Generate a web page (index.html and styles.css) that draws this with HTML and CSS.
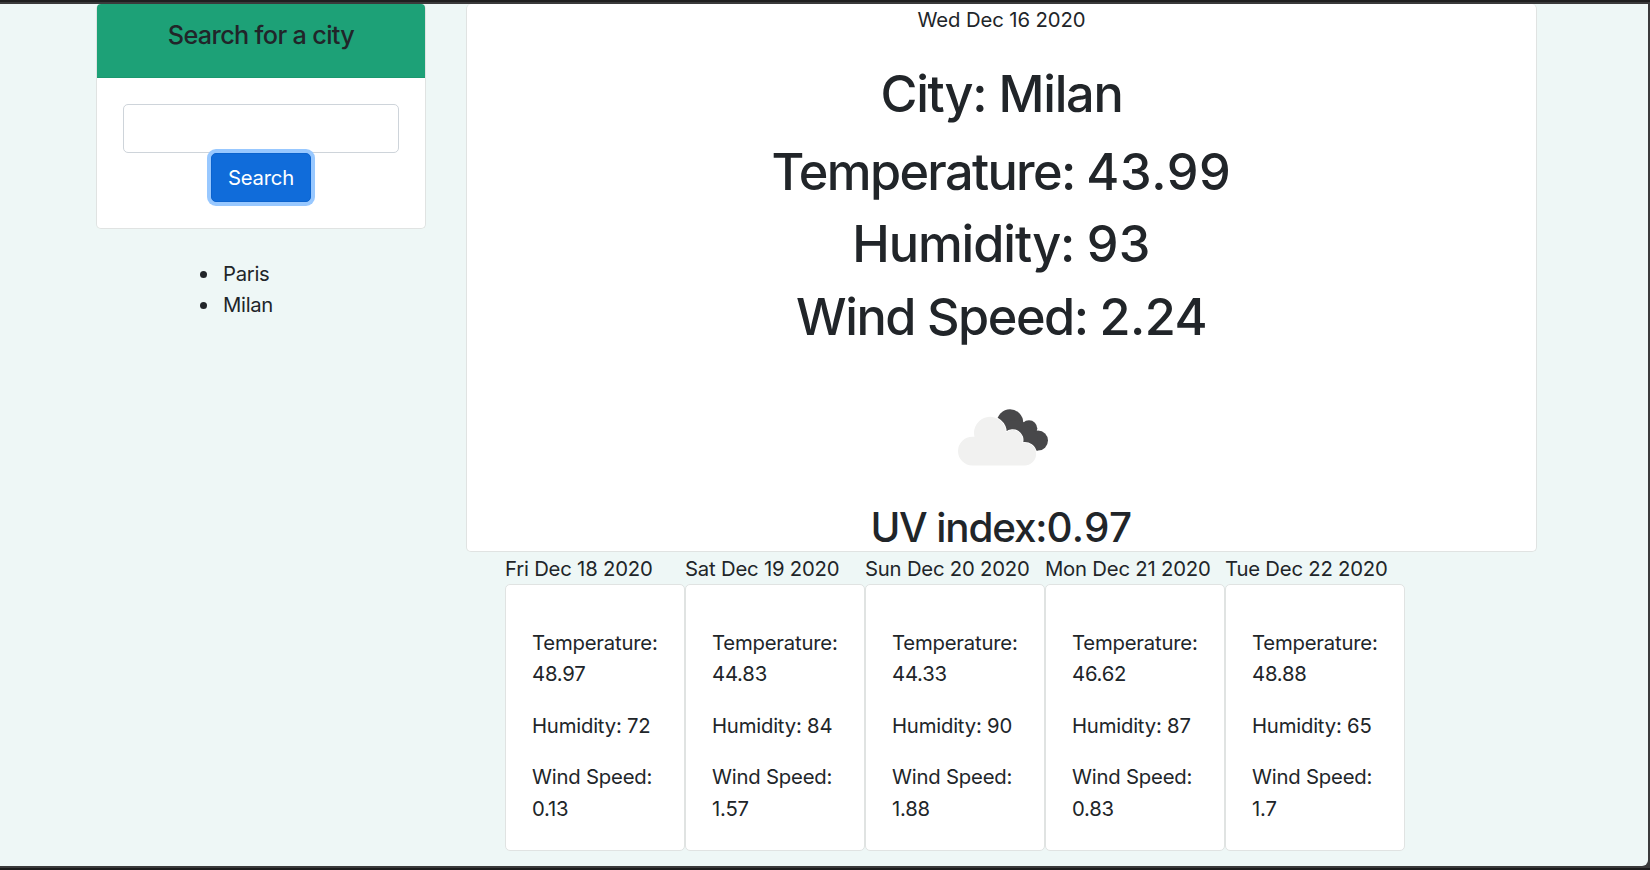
FILE: index.html
```html
<!DOCTYPE html>
<html lang="en">
<head>
<meta charset="utf-8">
<title>Weather Dashboard</title>
<link rel="stylesheet" href="styles.css">
</head>
<body>
<div class="window">
  <div class="page">
    <aside class="sidebar">
      <section class="card search-card">
        <h5 class="search-title">Search for a city</h5>
        <form class="search-body">
          <input class="search-input" type="text" aria-label="City">
          <button class="search-button" type="button">Search</button>
        </form>
      </section>
      <ul class="history">
        <li>Paris</li>
        <li>Milan</li>
      </ul>
    </aside>
    <main class="content">
      <section class="card current">
        <p class="current-date">Wed Dec 16 2020</p>
        <h1 class="city">City: Milan</h1>
        <h1 class="temp">Temperature: <span class="value">43.99</span></h1>
        <h1 class="humidity">Humidity: <span class="value">93</span></h1>
        <h1 class="wind">Wind Speed: <span class="value">2.24</span></h1>
        <svg class="weather-icon" viewBox="0 0 130 130" aria-hidden="true">
          <g fill="#48484a">
            <circle cx="73" cy="50.5" r="13.2"/>
            <circle cx="92" cy="56.6" r="8.3"/>
            <circle cx="101" cy="68.6" r="10"/>
            <path d="M62 50L84 48L100 62L101 78.6L80 78Z"/>
          </g>
          <g fill="#f1f1f0" stroke="#fff" stroke-width="1.6" paint-order="stroke">
            <path d="M35.4 93.5a14.4 14.4 0 0 1 0-28.8c.8 0 1.4 0 2.1.1A16 16 0 1 1 69 60.5A10 10 0 0 1 85.2 71A11.4 11.4 0 1 1 87 93.5Z"/>
          </g>
        </svg>
        <h2 class="uv">UV index:<span class="value">0.97</span></h2>
      </section>
      <div class="forecast">
        <div class="day">
          <div class="day-date">Fri Dec 18 2020</div>
          <div class="card day-card"><p>Temperature: 48.97</p><p>Humidity: 72</p><p>Wind Speed: 0.13</p></div>
        </div>
        <div class="day">
          <div class="day-date">Sat Dec 19 2020</div>
          <div class="card day-card"><p>Temperature: 44.83</p><p>Humidity: 84</p><p>Wind Speed: 1.57</p></div>
        </div>
        <div class="day">
          <div class="day-date">Sun Dec 20 2020</div>
          <div class="card day-card"><p>Temperature: 44.33</p><p>Humidity: 90</p><p>Wind Speed: 1.88</p></div>
        </div>
        <div class="day">
          <div class="day-date">Mon Dec 21 2020</div>
          <div class="card day-card"><p>Temperature: 46.62</p><p>Humidity: 87</p><p>Wind Speed: 0.83</p></div>
        </div>
        <div class="day">
          <div class="day-date">Tue Dec 22 2020</div>
          <div class="card day-card"><p>Temperature: 48.88</p><p>Humidity: 65</p><p>Wind Speed: 1.7</p></div>
        </div>
      </div>
    </main>
  </div>
</div>
</body>
</html>
```
FILE: styles.css
```css
* { box-sizing: border-box; }

body {
  margin: 0;
  background: #1f1f20;
  color: #212529;
  font: 400 20.3px/31.1px Inter, "Liberation Sans", sans-serif;
  letter-spacing: -0.2px;
}

h1, h2, h5, p, ul { margin: 0; padding: 0; }

.window {
  height: 870px;
  border-top: 2px solid #1f1f20;
  border-bottom: 2px solid #1c1c1d;
  padding: 2px 2px 2px 0;
  background: #3a3a3b;
  overflow: hidden;
}

.page {
  display: flex;
  align-items: flex-start;
  gap: 40px;
  height: 862px;
  padding-left: 96px;
  background: #eef7f6;
  border-bottom-right-radius: 6px;
}

.card {
  background: #fff;
  border: 1.5px solid #e0e3e2;
  border-radius: 5px;
}

.sidebar { width: 330px; }

.search-card { height: 225px; border-top: 0; }

.search-title {
  height: 74px;
  padding-top: 16px;
  background: #1da177;
  border-bottom: 1px solid #1b986f;
  border-radius: 4px 4px 0 0;
  text-align: center;
  font-size: 25.2px;
  font-weight: 500;
  letter-spacing: -0.65px;
}

.search-body {
  display: flex;
  flex-direction: column;
  align-items: center;
  padding: 26px;
}

.search-input {
  width: 276px;
  height: 49px;
  border: 1px solid #ced4da;
  border-radius: 5px;
  background: #fff;
}

.search-button {
  width: 100px;
  height: 49px;
  padding: 0;
  border: 1px solid #0b63ce;
  border-radius: 5px;
  background: #106cda;
  box-shadow: 0 0 0 4px #98c8ff;
  color: #fff;
  font: inherit;
  letter-spacing: -0.2px;
}

.history { padding: 29px 0 0 124px; }

.history li {
  padding-left: 3px;
  letter-spacing: -0.3px;
}

.content { width: 1071px; }

.current {
  height: 548px;
  border-top: 0;
  text-align: center;
  overflow: hidden;
}

.current-date {
  margin-bottom: 27.5px;
  letter-spacing: -0.1px;
}

h1 {
  margin-bottom: 10.4px;
  font-size: 50.4px;
  line-height: 62.4px;
  font-weight: 500;
}

.city { margin-bottom: 15.6px; letter-spacing: -1.25px; }
.temp { letter-spacing: -1.65px; }
.temp .value { letter-spacing: 0.65px; }
.humidity { letter-spacing: -1.05px; }
.humidity .value { letter-spacing: 0.4px; }
.wind { margin-bottom: 0; letter-spacing: -1.45px; }
.wind .value { letter-spacing: -0.6px; }

.weather-icon {
  display: block;
  width: 130px;
  height: 130px;
  margin: 23px auto 0;
}

.uv {
  padding-top: 1px;
  font-size: 40.4px;
  line-height: 50px;
  font-weight: 500;
  letter-spacing: -1.15px;
}

.uv .value { letter-spacing: 0.4px; }

.forecast {
  display: grid;
  grid-template-columns: repeat(5, 180px);
  padding: 0.5px 0 0 39px;
}

.day-card {
  height: 267px;
  padding: 42px 20px 0 26px;
}

.day-card p { margin-bottom: 20.8px; }
```
